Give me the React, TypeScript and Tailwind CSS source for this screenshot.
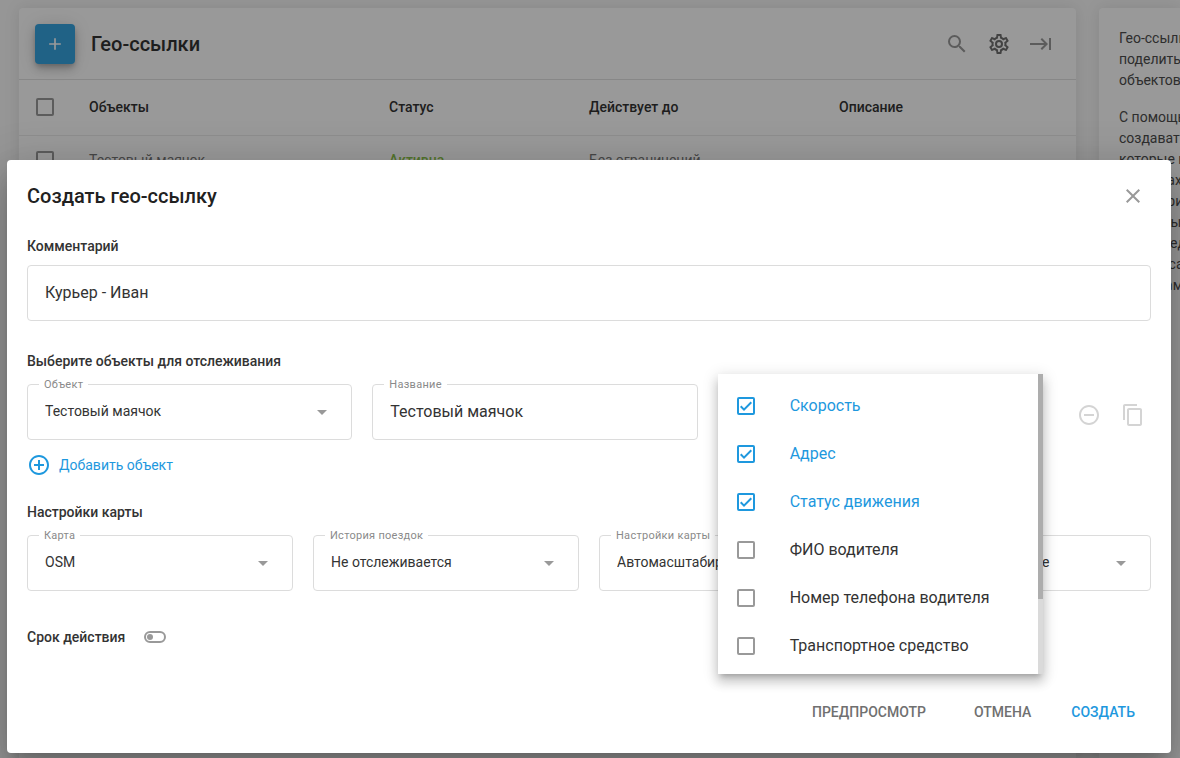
import { useState } from 'react';
import type { ReactNode } from 'react';
import {
  MdAdd,
  MdAddCircleOutline,
  MdArrowDropDown,
  MdClose,
  MdContentCopy,
  MdKeyboardTab,
  MdRemoveCircleOutline,
  MdSearch,
} from 'react-icons/md';

const COG_PATH =
  'M12,8A4,4 0 0,1 16,12A4,4 0 0,1 12,16A4,4 0 0,1 8,12A4,4 0 0,1 12,8M12,10A2,2 0 0,0 10,12A2,2 0 0,0 12,14A2,2 0 0,0 14,12A2,2 0 0,0 12,10M10,22C9.75,22 9.54,21.82 9.5,21.58L9.13,18.93C8.5,18.68 7.96,18.34 7.44,17.94L4.95,18.95C4.73,19.03 4.46,18.95 4.34,18.73L2.34,15.27C2.21,15.05 2.27,14.78 2.46,14.63L4.57,12.97L4.5,12L4.57,11L2.46,9.37C2.27,9.22 2.21,8.95 2.34,8.73L4.34,5.27C4.46,5.05 4.73,4.96 4.95,5.05L7.44,6.05C7.96,5.66 8.5,5.32 9.13,5.07L9.5,2.42C9.54,2.18 9.75,2 10,2H14C14.25,2 14.46,2.18 14.5,2.42L14.87,5.07C15.5,5.32 16.04,5.66 16.56,6.05L19.05,5.05C19.27,4.96 19.54,5.05 19.66,5.27L21.66,8.73C21.79,8.95 21.73,9.22 21.54,9.37L19.43,11L19.5,12L19.43,13L21.54,14.63C21.73,14.78 21.79,15.05 21.66,15.27L19.66,18.73C19.54,18.95 19.27,19.04 19.05,18.95L16.56,17.95C16.04,18.34 15.5,18.68 14.87,18.93L14.5,21.58C14.46,21.82 14.25,22 14,22H10M11.25,4L10.88,6.61C9.68,6.86 8.62,7.5 7.85,8.39L5.44,7.35L4.69,8.65L6.8,10.2C6.4,11.37 6.4,12.64 6.8,13.8L4.68,15.36L5.43,16.66L7.86,15.62C8.63,16.5 9.68,17.14 10.87,17.38L11.24,20H12.76L13.13,17.39C14.32,17.14 15.37,16.5 16.14,15.62L18.57,16.66L19.32,15.36L17.2,13.81C17.6,12.64 17.6,11.37 17.2,10.2L19.31,8.65L18.56,7.35L16.15,8.39C15.38,7.5 14.32,6.86 13.12,6.62L12.75,4H11.25Z';
const BOX_PATH =
  'M19,3H5A2,2 0 0,0 3,5V19A2,2 0 0,0 5,21H19A2,2 0 0,0 21,19V5A2,2 0 0,0 19,3M19,5V19H5V5H19Z';
const CHECK_PATH = 'M10,17L6,13L7.41,11.58L10,14.17L16.59,7.58L18,9Z';

const MENU_OPTIONS = [
  'Скорость',
  'Адрес',
  'Статус движения',
  'ФИО водителя',
  'Номер телефона водителя',
  'Транспортное средство',
];

const MAP_FIELDS = [
  { id: 'map', label: 'Карта', value: 'OSM' },
  { id: 'history', label: 'История поездок', value: 'Не отслеживается' },
  { id: 'map-settings', label: 'Настройки карты', value: 'Автомасштабирование' },
  { id: 'display', label: '', value: 'Показывать название' },
];

interface CheckboxProps {
  id?: string;
  label?: string;
  checked?: boolean;
  onChange?: () => void;
}

function Checkbox({ id, label, checked = false, onChange }: CheckboxProps) {
  return (
    <span className="relative block size-6 shrink-0">
      <input
        id={id}
        type="checkbox"
        aria-label={label}
        checked={checked}
        onChange={() => onChange?.()}
        className="absolute inset-0 size-6 cursor-pointer opacity-0"
      />
      <svg
        viewBox="0 0 24 24"
        className={checked ? 'size-6 fill-[#1e98de]' : 'size-6 fill-[#999999]'}
      >
        <path d={BOX_PATH} />
        {checked && <path d={CHECK_PATH} />}
      </svg>
    </span>
  );
}

interface FieldProps {
  id: string;
  label: string;
  children: ReactNode;
}

function Field({ id, label, children }: FieldProps) {
  return (
    <div className="relative min-w-0 flex-1">
      {children}
      {label && (
        <label
          htmlFor={id}
          className="absolute -top-[7px] left-3 bg-white px-[5px] text-[11px] leading-4 tracking-wide text-[#8a8a8a]"
        >
          {label}
        </label>
      )}
    </div>
  );
}

function SelectField({ id, label, value }: { id: string; label: string; value: string }) {
  return (
    <Field id={id} label={label}>
      <select
        id={id}
        aria-label={label || value}
        className="h-14 w-full appearance-none rounded border border-[#dcdcdc] bg-white pr-11 pb-[2px] pl-[17px] text-sm text-[#333333]"
      >
        <option>{value}</option>
      </select>
      <MdArrowDropDown className="pointer-events-none absolute top-4 right-[18px] size-6 text-[#999999]" />
    </Field>
  );
}

function FieldsMenu() {
  const [selected, setSelected] = useState<string[]>(MENU_OPTIONS.slice(0, 3));

  const toggle = (name: string) => {
    setSelected((prev) =>
      prev.includes(name) ? prev.filter((item) => item !== name) : [...prev, name]
    );
  };

  return (
    <div className="absolute inset-x-0 -top-[10px] z-10 flex bg-white shadow-[0_5px_5px_-3px_rgba(0,0,0,0.2),0_8px_10px_1px_rgba(0,0,0,0.14),0_3px_14px_2px_rgba(0,0,0,0.12)]">
      <ul className="min-w-0 flex-1 pt-2 pb-1">
        {MENU_OPTIONS.map((name, index) => {
          const checked = selected.includes(name);
          return (
            <li key={name} className="flex h-12 items-center pl-4">
              <Checkbox id={`option-${index}`} checked={checked} onChange={() => toggle(name)} />
              <label
                htmlFor={`option-${index}`}
                className={
                  checked
                    ? 'cursor-pointer truncate pl-8 text-base text-[#1e98de]'
                    : 'cursor-pointer truncate pl-8 text-base text-[#333333]'
                }
              >
                {name}
              </label>
            </li>
          );
        })}
      </ul>
      <div className="w-[5px] bg-[#dadada]">
        <div className="h-3/4 bg-[#adadad]" />
      </div>
    </div>
  );
}

function LinksPage() {
  return (
    <div className="flex min-h-screen bg-[#fafafa] pt-2 pl-[19px]">
      <main className="min-w-0 flex-1 rounded-t bg-white shadow-[0_0_16px_rgba(0,0,0,0.1)]">
        <header className="flex h-[72px] items-center border-b border-[#e2e2e2] pr-[23px] pl-4">
          <button
            type="button"
            aria-label="Добавить"
            className="flex size-10 items-center justify-center rounded bg-[#36a3e0] text-white shadow-[0_3px_5px_-1px_rgba(0,0,0,0.2),0_6px_10px_rgba(0,0,0,0.14),0_1px_18px_rgba(0,0,0,0.12)]"
          >
            <MdAdd className="size-5" />
          </button>
          <h1 className="flex-1 pl-4 text-xl font-medium text-[#333333]">Гео-ссылки</h1>
          <div className="flex gap-[18px]">
            <button type="button" aria-label="Поиск">
              <MdSearch className="size-6 text-[#999999]" />
            </button>
            <button type="button" aria-label="Настройки">
              <svg viewBox="0 0 24 24" className="size-6 fill-[#707070]">
                <path d={COG_PATH} />
              </svg>
            </button>
            <button type="button" aria-label="Свернуть">
              <MdKeyboardTab className="size-6 text-[#999999]" />
            </button>
          </div>
        </header>
        <table className="w-full table-fixed text-left text-sm">
          <colgroup>
            <col className="w-[70px]" />
            <col className="w-[300px]" />
            <col className="w-[200px]" />
            <col className="w-[250px]" />
            <col />
          </colgroup>
          <thead className="text-[#333333]">
            <tr className="h-[55px] border-b border-[#ececec]">
              <th className="pl-[14px]">
                <Checkbox label="Выбрать все" />
              </th>
              <th className="font-medium">Объекты</th>
              <th className="font-medium">Статус</th>
              <th className="font-medium">Действует до</th>
              <th className="font-medium">Описание</th>
            </tr>
          </thead>
          <tbody>
            <tr className="h-[50px] text-[#777777]">
              <td className="pl-[14px]">
                <Checkbox label="Выбрать" />
              </td>
              <td>Тестовый маячок</td>
              <td className="font-medium text-[#8bc34a]">Активна</td>
              <td>Без ограничений</td>
              <td />
            </tr>
          </tbody>
        </table>
      </main>
      <aside className="ml-[23px] w-[81px] overflow-hidden rounded-tl bg-white pt-5 pl-5 text-sm leading-[21px] whitespace-nowrap text-[#4d4d4d] shadow-[0_0_16px_rgba(0,0,0,0.1)]">
        <p>
          Гео-ссылки
          <br />
          поделиться
          <br />
          объектов
        </p>
        <p className="pt-4">
          С помощью
          <br />
          создавать
          <br />
          которые на
          <br />
          на картах
          <br />
          посмотрим
          <br />
          не видны
          <br />
          для передачи
          <br />
          за адресами
          <br />
          объектам
        </p>
      </aside>
    </div>
  );
}

function CreateLinkDialog() {
  const [limited, setLimited] = useState(false);

  return (
    <section
      role="dialog"
      aria-labelledby="dialog-title"
      className="w-full rounded bg-white px-5 pt-5 pb-[23px] text-[#333333] shadow-[0_11px_15px_-7px_rgba(0,0,0,0.2),0_24px_38px_3px_rgba(0,0,0,0.14),0_9px_46px_8px_rgba(0,0,0,0.12)]"
    >
      <header className="flex h-8 items-center justify-between pr-[6px]">
        <h2 id="dialog-title" className="text-xl font-medium text-[#212121]">
          Создать гео-ссылку
        </h2>
        <button type="button" aria-label="Закрыть">
          <MdClose className="size-6 text-[#999999]" />
        </button>
      </header>

      <label htmlFor="comment" className="mt-6 block text-sm leading-5 font-medium">
        Комментарий
      </label>
      <input
        id="comment"
        defaultValue="Курьер - Иван"
        className="mt-[9px] block h-14 w-full rounded border border-[#dcdcdc] px-[17px] pb-[2px] text-base"
      />

      <h3 className="mt-[30px] text-sm leading-5 font-medium">Выберите объекты для отслеживания</h3>
      <div className="mt-[13px] flex gap-5">
        <SelectField id="object" label="Объект" value="Тестовый маячок" />
        <Field id="name" label="Название">
          <input
            id="name"
            defaultValue="Тестовый маячок"
            className="block h-14 w-full rounded border border-[#dcdcdc] px-[17px] pb-[2px] text-base"
          />
        </Field>
        <div className="relative min-w-0 flex-1">
          <FieldsMenu />
        </div>
        <div className="flex w-[88px] items-center gap-5 pt-[6px] pl-[14px] text-[#d4d4d4]">
          <button type="button" aria-label="Удалить объект">
            <MdRemoveCircleOutline className="size-6" />
          </button>
          <button type="button" aria-label="Копировать объект">
            <MdContentCopy className="size-6" />
          </button>
        </div>
      </div>
      <button type="button" className="mt-[13px] flex h-6 items-center gap-2 text-sm text-[#1e98de]">
        <MdAddCircleOutline className="size-6" />
        Добавить объект
      </button>

      <h3 className="mt-[25px] text-sm leading-5 font-medium">Настройки карты</h3>
      <div className="mt-[13px] flex gap-5">
        {MAP_FIELDS.map((field) => (
          <SelectField key={field.id} {...field} />
        ))}
      </div>

      <div className="mt-9 flex h-5 items-center gap-[19px]">
        <label htmlFor="limited" className="text-sm font-medium">
          Срок действия
        </label>
        <span className="relative flex h-3 w-[22px] items-center rounded-full border-2 border-[#999999] px-px">
          <input
            id="limited"
            type="checkbox"
            role="switch"
            checked={limited}
            onChange={() => setLimited(!limited)}
            className="absolute inset-0 cursor-pointer opacity-0"
          />
          <span
            className={
              limited
                ? 'ml-auto size-[6px] rounded-full bg-[#1e98de]'
                : 'size-[6px] rounded-full bg-[#999999]'
            }
          />
        </span>
      </div>

      <footer className="mt-[47px] flex h-9 items-center justify-end gap-6 pr-2 text-sm font-medium text-[#707070]">
        <div className="flex gap-8">
          <button type="button" className="px-2 uppercase">
            Предпросмотр
          </button>
          <button type="button" className="px-2 uppercase">
            Отмена
          </button>
        </div>
        <button type="button" className="px-2 text-[#1e98de] uppercase">
          Создать
        </button>
      </footer>
    </section>
  );
}

export default function App() {
  return (
    <div className="relative h-screen overflow-hidden font-[Roboto,sans-serif]">
      <LinksPage />
      <div className="absolute inset-0 bg-black/40 pt-40 pr-[9px] pl-[7px]">
        <CreateLinkDialog />
      </div>
    </div>
  );
}
